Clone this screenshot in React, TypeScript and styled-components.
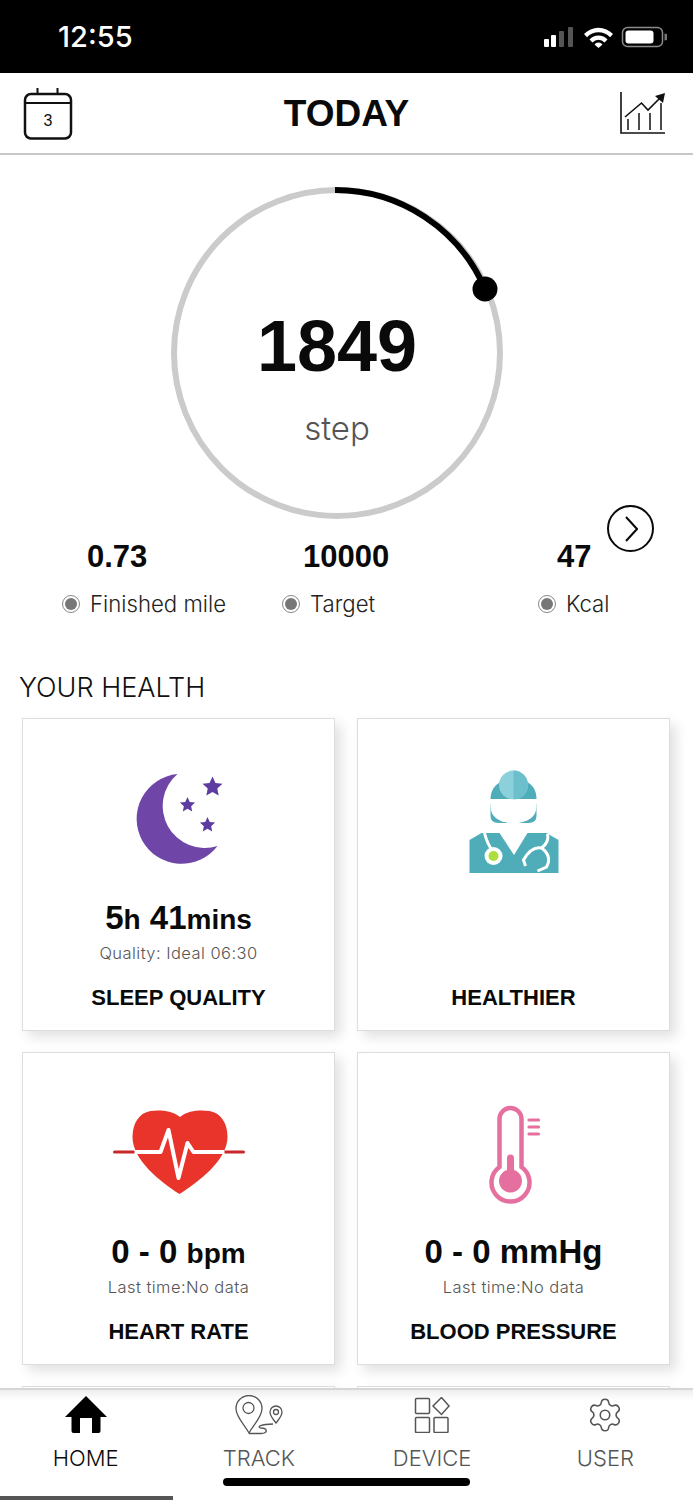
import styled, { createGlobalStyle } from "styled-components";
import { Settings } from "lucide-react";

const GlobalStyle = createGlobalStyle`
  html, body {
    margin: 0;
    padding: 0;
    background: #fff;
    font-family: "Inter", "Liberation Sans", sans-serif;
  }
`;

const Screen = styled.div`
  position: relative;
  width: 693px;
  height: 1500px;
  overflow: hidden;
  display: flex;
  flex-direction: column;
  background: #fff;
`;

const StatusBar = styled.div`
  height: 73px;
  flex-shrink: 0;
  background: #000;
  display: flex;
  align-items: center;
  justify-content: space-between;
  padding: 0 26px 0 58px;
  box-sizing: border-box;
`;

const Clock = styled.span`
  color: #fff;
  font-size: 29px;
  font-weight: 500;
  line-height: 1;
`;

const StatusIcons = styled.div`
  display: flex;
  align-items: center;
`;

const Header = styled.header`
  height: 82px;
  flex-shrink: 0;
  box-sizing: border-box;
  border-bottom: 2px solid #c8c8c8;
  display: flex;
  align-items: center;
  justify-content: space-between;
  padding: 0 27px 0 23px;
`;

const HeaderTitle = styled.h1`
  margin: 2px 0 0;
  font-family: "Liberation Sans", sans-serif;
  font-size: 37px;
  font-weight: 700;
  color: #0a0a0a;
`;

const Content = styled.main`
  flex: 1;
  min-height: 0;
  overflow: hidden;
`;

const RingSection = styled.section`
  display: flex;
  padding: 28px 0 0 167px;
`;

const RingStack = styled.div`
  display: grid;
  width: 340px;
  height: 340px;

  & > * {
    grid-area: 1 / 1;
  }
`;

const RingText = styled.div`
  display: flex;
  flex-direction: column;
  align-items: center;
  padding-top: 122px;
`;

const Steps = styled.div`
  font-family: "Liberation Sans", sans-serif;
  font-size: 72px;
  font-weight: 700;
  line-height: 82px;
  color: #0a0a0a;
`;

const StepUnit = styled.div`
  font-size: 33px;
  font-weight: 300;
  line-height: 40px;
  margin-top: 21px;
  color: #555;
`;

const StatsRow = styled.section`
  position: relative;
  display: grid;
  grid-template-columns: 220px 256px 1fr;
  padding: 16px 0 0 62px;
`;

const Stat = styled.div<{ $offset: number }>`
  display: flex;
  flex-direction: column;
  gap: 14px;

  & > strong {
    margin-left: ${({ $offset }) => $offset}px;
  }
`;

const StatValue = styled.strong`
  font-family: "Liberation Sans", sans-serif;
  font-size: 31px;
  line-height: 36px;
  color: #0a0a0a;
`;

const StatLabel = styled.span`
  display: flex;
  align-items: center;
  gap: 10px;
  font-size: 22.2px;
  font-weight: 300;
  line-height: 30px;
  color: #222;
`;

const Radio = styled.i`
  width: 18px;
  height: 18px;
  box-sizing: border-box;
  border-radius: 50%;
  border: 1px solid #888;
  padding: 2px;
  background: #777;
  background-clip: content-box;
`;

const NextButton = styled.div`
  position: absolute;
  top: -18px;
  left: 607px;
  width: 47px;
  height: 47px;
  box-sizing: border-box;
  border-radius: 50%;
  border: 2px solid #0a0a0a;
  display: flex;
  align-items: center;
  justify-content: center;
`;

const SectionTitle = styled.h2`
  margin: 54px 0 15px 19px;
  font-size: 27px;
  font-weight: 300;
  line-height: 30px;
  color: #111;
`;

const CardGrid = styled.section`
  display: grid;
  grid-template-columns: 313px 313px;
  grid-auto-rows: 313px;
  gap: 21px 22px;
  padding-left: 22px;
`;

const Card = styled.article`
  box-sizing: border-box;
  border: 1px solid #ddd;
  background: #fff;
  box-shadow: 6px 6px 12px rgba(0, 0, 0, 0.12);
  display: flex;
  flex-direction: column;
  align-items: center;
`;

const CardIcon = styled.div`
  height: 179px;
  flex-shrink: 0;
  box-sizing: border-box;
  padding-top: 49px;
  display: flex;
  justify-content: center;
  align-items: flex-start;
`;

const CardValue = styled.div`
  height: 40px;
  font-family: "Liberation Sans", sans-serif;
  font-size: 33px;
  font-weight: 700;
  line-height: 40px;
  color: #0a0a0a;
  white-space: pre;
`;

const Small = styled.span`
  font-size: 28px;
`;

const CardNote = styled.div`
  font-size: 16.5px;
  font-weight: 300;
  line-height: 20px;
  margin-top: 5px;
  letter-spacing: 0.45px;
  color: #555;
`;

const CardName = styled.div`
  margin-top: auto;
  margin-bottom: 19px;
  font-family: "Liberation Sans", sans-serif;
  font-size: 22px;
  font-weight: 700;
  line-height: 26px;
  color: #0a0a0a;
`;

const TabBar = styled.nav`
  position: relative;
  height: 112px;
  flex-shrink: 0;
  box-sizing: border-box;
  border-top: 2px solid #d6d6d6;
  background: linear-gradient(#eee, #fff 10px);
  display: grid;
  grid-template-columns: repeat(4, 1fr);
  padding-top: 5px;
`;

const Tab = styled.div<{ $active?: boolean }>`
  display: flex;
  flex-direction: column;
  align-items: center;
  margin-left: -2px;
  color: ${({ $active }) => ($active ? "#0a0a0a" : "#555")};
`;

const TabIcon = styled.div`
  height: 40px;
  display: flex;
  align-items: center;
  justify-content: center;
`;

const TabLabel = styled.span`
  margin-top: 9px;
  font-size: 22px;
  font-weight: 300;
  line-height: 28px;
`;

const HomeIndicator = styled.div`
  position: absolute;
  left: 223px;
  bottom: 14px;
  width: 247px;
  height: 8px;
  border-radius: 4px;
  background: #000;
`;

const ActiveMark = styled.div`
  position: absolute;
  left: 0;
  bottom: 0;
  width: 173px;
  height: 4px;
  background: #555;
`;

const starPoints = (cx: number, cy: number, r: number) =>
  Array.from({ length: 10 }, (_, i) => {
    const radius = i % 2 ? r * 0.48 : r;
    const a = -Math.PI / 2 + (i * Math.PI) / 5;
    return `${cx + radius * Math.cos(a)},${cy + radius * Math.sin(a)}`;
  }).join(" ");

const StatusGlyphs = () => (
  <StatusIcons>
    <svg width="123" height="22" viewBox="544 31 123 22">
      <rect x="544" y="44" width="5" height="8" rx="1" fill="#fff" />
      <rect x="551" y="40" width="5" height="12" rx="1" fill="#fff" />
      <rect x="559" y="36" width="5" height="16" rx="1" fill="#555" />
      <rect x="568" y="32" width="5" height="20" rx="1" fill="#555" />
      <path d="M584 39a20 20 0 0 1 29 0l-3 3.200a16 16 0 0 0-23 0z" fill="#fff" />
      <path d="M589.500 44.500a12 12 0 0 1 18 0l-3 3a8 8 0 0 0-12 0z" fill="#fff" />
      <path d="M594.500 49.500a5 5 0 0 1 8 0l-4 3.500z" fill="#fff" />
      <rect x="622.500" y="32.500" width="40" height="19" rx="5" fill="none" stroke="#8a8a8a" strokeWidth="1.500" />
      <rect x="625.500" y="35.500" width="28" height="13" rx="3" fill="#fff" />
      <path d="M664.500 38.500a3.500 3.500 0 0 1 0 7z" fill="#777" />
    </svg>
  </StatusIcons>
);

const CalendarIcon = () => (
  <svg width="50" height="53" viewBox="23 85 50 53">
    <rect x="25" y="92" width="46" height="44.500" rx="6" fill="none" stroke="#111" strokeWidth="2.500" />
    <path d="M25 101H71M37.500 86V92M57.500 86V92" stroke="#111" strokeWidth="2" fill="none" />
    <text x="48" y="123.500" textAnchor="middle" fontFamily="Liberation Sans" fontSize="16" fill="#111">
      3
    </text>
  </svg>
);

const ChartIcon = () => (
  <svg width="46" height="42" viewBox="620 92 46 42">
    <path d="M621 92V133H665" fill="none" stroke="#111" strokeWidth="1.600" />
    <path d="M628 119V130M639 113V130M650 113V130M661 103V130" fill="none" stroke="#111" strokeWidth="1.500" />
    <path d="M625 117L641.500 103L648 110L661 97" fill="none" stroke="#111" strokeWidth="1.600" />
    <path d="M655 96L665 93L663 103z" fill="#111" />
  </svg>
);

const ProgressRing = () => (
  <svg width="340" height="340" viewBox="167 183 340 340">
    <circle cx="337" cy="353" r="163" fill="none" stroke="#cbcbcb" strokeWidth="6" />
    <path d="M335 190A163 163 0 0 1 485 289" fill="none" stroke="#000" strokeWidth="6" />
    <circle cx="485" cy="289" r="12.500" fill="#000" />
  </svg>
);

const MoonIcon = () => (
  <svg width="134" height="120" viewBox="111.500 768 134 120">
    <path d="M177 774A45 45 0 1 0 217 846A42 42 0 0 1 177 774Z" fill="#6f45a8" />
    <polygon points={starPoints(212, 787, 10.500)} fill="#5f3da0" />
    <polygon points={starPoints(187, 805, 8)} fill="#5f3da0" />
    <polygon points={starPoints(207, 825, 8)} fill="#5f3da0" />
  </svg>
);

const DoctorIcon = () => (
  <svg width="134" height="120" viewBox="446.500 768 134 120">
    <path d="M490 799C490 786 500 779 513.500 779S536 786 536 799Z" fill="#4fadb9" />
    <circle cx="513" cy="785" r="14.500" fill="#8bd0da" />
    <path d="M513 770.500a14.500 14.500 0 0 1 0 29z" fill="#6cc0cc" />
    <path d="M490 804H536V816Q536 823 528 823H498Q490 823 490 816Z" fill="#4fadb9" />
    <path d="M490 799.500H536V806Q536 822 513 823.500Q490 822 490 806Z" fill="#fff" />
    <path d="M481 833H546L558 840V873H469V840Z" fill="#4fadb9" />
    <path d="M499 833H527L513.500 855Z" fill="#fff" />
    <path d="M484 833Q487 845 493 852" fill="none" stroke="#fff" strokeWidth="3" />
    <circle cx="493" cy="856" r="9" fill="#fff" />
    <circle cx="493" cy="856" r="5" fill="#aede3c" />
    <path d="M547 834Q549 842 541 848Q531 846 523 860L525 866M541 848Q552 856 546 867L537 871" fill="none" stroke="#fff" strokeWidth="3" />
  </svg>
);

const HeartIcon = () => (
  <svg width="134" height="120" viewBox="111.500 1102 134 120">
    <path d="M179.500 1117C171 1110 158 1110 150 1111C138 1113 132 1124 132 1137C132 1160 160 1182 179 1194C198 1182 227 1160 227 1137C227 1124 221 1113 209 1111C200 1110 188 1110 179.500 1117Z" fill="#e8342a" />
    <path d="M114 1152H134M224 1152H243" stroke="#c8282a" strokeWidth="3" strokeLinecap="round" />
    <path d="M134 1152H160L168 1130L178 1178L187 1143L193 1152H224" fill="none" stroke="#fff" strokeWidth="4" strokeLinejoin="round" />
  </svg>
);

const ThermometerIcon = () => (
  <svg width="134" height="120" viewBox="446.500 1102 134 120">
    <path d="M499 1167V1119a11 11 0 0 1 22 0V1167a19 19 0 1 1-22 0Z" fill="none" stroke="#e5709f" strokeWidth="4.500" />
    <path d="M506.500 1158a3.500 3.500 0 0 1 7 0V1170a11.500 11.500 0 1 1-7 0Z" fill="#e5709f" />
    <path d="M528.500 1120H538M528.500 1127H538M528.500 1134H538" stroke="#e5709f" strokeWidth="3.200" strokeLinecap="round" />
  </svg>
);

const HomeIcon = () => (
  <svg width="42" height="38" viewBox="65 1396 42 38">
    <path d="M86 1396L107 1417H100.500V1431Q100.500 1433 98.500 1433H92V1418H80V1433H73.500Q71.500 1433 71.500 1431V1417H65Z" fill="#000" />
  </svg>
);

const TrackIcon = () => (
  <svg width="48" height="40" viewBox="236 1395 48 40" fill="none" stroke="#555" strokeWidth="1.300">
    <path d="M250 1433C245 1424 237 1417 237 1408.500a13 13 0 0 1 26 0C263 1417 255 1424 250 1433Z" />
    <circle cx="249.500" cy="1408" r="5.500" />
    <path d="M277 1423C274 1419 271 1416 271 1412a6 6 0 0 1 12 0C283 1416 280 1419 277 1423Z" />
    <circle cx="277" cy="1412" r="2.500" />
    <path d="M250 1433.500H262C270 1433 268 1428 262 1428C257 1427 262 1424 274 1424" />
  </svg>
);

const DeviceIcon = () => (
  <svg width="36" height="36" viewBox="415 1397 36 36" fill="none" stroke="#555" strokeWidth="1.500">
    <rect x="416.500" y="1398.500" width="14" height="15" rx="1" />
    <path d="M442.500 1397.500L450 1406L442.500 1414.500L434 1406Z" />
    <rect x="416.500" y="1417.500" width="14" height="15" rx="1" />
    <rect x="435" y="1417.500" width="14" height="15" rx="1" />
  </svg>
);

const App = () => (
  <Screen>
    <GlobalStyle />
    <StatusBar>
      <Clock>12:55</Clock>
      <StatusGlyphs />
    </StatusBar>
    <Header>
      <CalendarIcon />
      <HeaderTitle>TODAY</HeaderTitle>
      <ChartIcon />
    </Header>
    <Content>
      <RingSection>
        <RingStack>
          <ProgressRing />
          <RingText>
            <Steps>1849</Steps>
            <StepUnit>step</StepUnit>
          </RingText>
        </RingStack>
      </RingSection>
      <StatsRow>
        <Stat $offset={25}>
          <StatValue>0.73</StatValue>
          <StatLabel>
            <Radio />
            Finished mile
          </StatLabel>
        </Stat>
        <Stat $offset={21}>
          <StatValue>10000</StatValue>
          <StatLabel>
            <Radio />
            Target
          </StatLabel>
        </Stat>
        <Stat $offset={19}>
          <StatValue>47</StatValue>
          <StatLabel>
            <Radio />
            Kcal
          </StatLabel>
        </Stat>
        <NextButton>
          <svg width="14" height="26" viewBox="0 0 14 26" fill="none" stroke="#0a0a0a" strokeWidth="2">
            <path d="M2 1L13 13L2 25" />
          </svg>
        </NextButton>
      </StatsRow>
      <SectionTitle>YOUR HEALTH</SectionTitle>
      <CardGrid>
        <Card>
          <CardIcon>
            <MoonIcon />
          </CardIcon>
          <CardValue>
            5<Small>h</Small> 41<Small>mins</Small>
          </CardValue>
          <CardNote>Quality: Ideal 06:30</CardNote>
          <CardName>SLEEP QUALITY</CardName>
        </Card>
        <Card>
          <CardIcon>
            <DoctorIcon />
          </CardIcon>
          <CardName>HEALTHIER</CardName>
        </Card>
        <Card>
          <CardIcon>
            <HeartIcon />
          </CardIcon>
          <CardValue>
            0 - 0 <Small>bpm</Small>
          </CardValue>
          <CardNote>Last time:No data</CardNote>
          <CardName>HEART RATE</CardName>
        </Card>
        <Card>
          <CardIcon>
            <ThermometerIcon />
          </CardIcon>
          <CardValue>0 - 0 mmHg</CardValue>
          <CardNote>Last time:No data</CardNote>
          <CardName>BLOOD PRESSURE</CardName>
        </Card>
        <Card />
        <Card />
      </CardGrid>
    </Content>
    <TabBar>
      <Tab $active>
        <TabIcon>
          <HomeIcon />
        </TabIcon>
        <TabLabel>HOME</TabLabel>
      </Tab>
      <Tab>
        <TabIcon>
          <TrackIcon />
        </TabIcon>
        <TabLabel>TRACK</TabLabel>
      </Tab>
      <Tab>
        <TabIcon>
          <DeviceIcon />
        </TabIcon>
        <TabLabel>DEVICE</TabLabel>
      </Tab>
      <Tab>
        <TabIcon>
          <Settings size={38} strokeWidth={1} />
        </TabIcon>
        <TabLabel>USER</TabLabel>
      </Tab>
      <HomeIndicator />
      <ActiveMark />
    </TabBar>
  </Screen>
);

export default App;
